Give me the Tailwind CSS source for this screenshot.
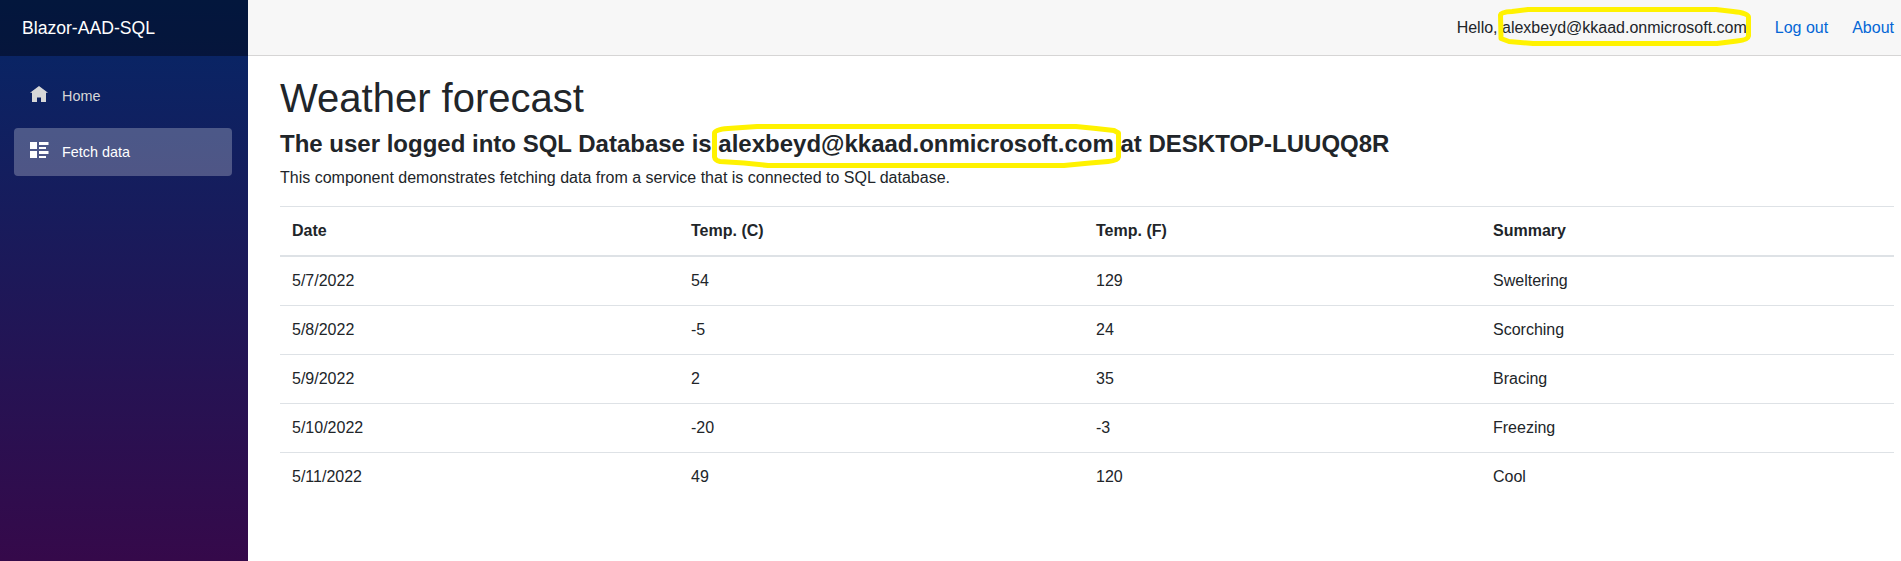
<!DOCTYPE html>
<html lang="en">
<head>
<meta charset="utf-8">
<title>Blazor-AAD-SQL</title>
<script src="https://cdn.jsdelivr.net/npm/@tailwindcss/browser@4"></script>
</head>
<body class="relative flex h-screen overflow-hidden bg-white font-['Liberation_Sans',Arial,sans-serif] text-base text-[#212529]">
<aside class="w-[248px] shrink-0 bg-[linear-gradient(180deg,#052767_0px,#3a0647_618px)]">
  <div class="flex h-14 items-center bg-black/40 pl-[22px] pb-px">
    <a class="text-[17.6px] leading-6 text-white">Blazor-AAD-SQL</a>
  </div>
  <nav class="flex flex-col gap-2 pt-4 pr-4 pl-[14px] text-[14.4px]">
    <a class="flex h-12 items-center rounded pl-4 text-[#d7d7d7]">
      <svg class="mb-1 h-4 w-[18px]" viewBox="0 0 18 16" fill="currentColor"><path d="M9 0L0 6.800H2V16H7V11.500H11V16H16V6.800H18Z"/></svg>
      <span class="pt-0.5 pl-[14px]">Home</span>
    </a>
    <a class="flex h-12 items-center rounded bg-white/25 pl-4 text-white">
      <svg class="mb-1 h-4 w-[19px]" viewBox="0 0 19 16" fill="currentColor"><path d="M0 0H7V7H0ZM9 0H18.500V3H9ZM9 5H16V7H9ZM0 9H7V16H0ZM9 9H18.500V12H9ZM9 14H16V16H9Z"/></svg>
      <span class="pt-0.5 pl-[13px]">Fetch data</span>
    </a>
  </nav>
</aside>
<main class="min-w-0 flex-1">
  <header class="flex h-14 items-center justify-end border-b border-[#d6d5d5] bg-[#f7f7f7] pr-[7px]">
    <span>Hello, alexbeyd@kkaad.onmicrosoft.com</span>
    <a class="ml-7 text-[#0366d6]">Log out</a>
    <a class="ml-6 text-[#0366d6]">About</a>
  </header>
  <section class="pt-[17.6px] pr-[7px] pl-8">
    <h1 class="mb-2 text-[40px] leading-[48px]">Weather forecast</h1>
    <h3 class="mb-2 text-2xl leading-[28.8px] font-bold">The user logged into SQL Database is alexbeyd@kkaad.onmicrosoft.com at DESKTOP-LUUQQ8R</h3>
    <p class="mb-[15.6px]">This component demonstrates fetching data from a service that is connected to SQL database.</p>
    <table class="w-full table-fixed border-separate border-spacing-0 text-left [&_td]:p-3 [&_th]:p-3 [&_th]:border-t [&_th]:border-b-2 [&_th]:border-[#dee2e6] [&_td]:border-[#dee2e6] [&_tr+tr_td]:border-t">
      <colgroup><col class="w-[399px]"><col class="w-[405px]"><col class="w-[397px]"><col></colgroup>
      <thead><tr><th>Date</th><th>Temp. (C)</th><th>Temp. (F)</th><th>Summary</th></tr></thead>
      <tbody>
        <tr><td>5/7/2022</td><td>54</td><td>129</td><td>Sweltering</td></tr>
        <tr><td>5/8/2022</td><td>-5</td><td>24</td><td>Scorching</td></tr>
        <tr><td>5/9/2022</td><td>2</td><td>35</td><td>Bracing</td></tr>
        <tr><td>5/10/2022</td><td>-20</td><td>-3</td><td>Freezing</td></tr>
        <tr><td>5/11/2022</td><td>49</td><td>120</td><td>Cool</td></tr>
      </tbody>
    </table>
  </section>
</main>
<!-- Hand-drawn highlighter rings over the user names -->
<svg class="pointer-events-none absolute top-0 left-0 h-[561px] w-[1901px]" viewBox="0 0 1901 561" fill="none" stroke="#fff200" stroke-width="5" stroke-linejoin="round">
  <path d="M1500.500 15Q1501 12 1512 11.500L1528 9.500H1716L1733 11.500Q1748 13 1748.500 17V36Q1748 40 1737 41L1717 43.500H1533L1509 41.500L1501 38.500Z"/>
  <path d="M714.500 133Q715 129.500 728 128.500L757 126.500H1076L1096 128.500L1114 130.500L1118.500 133V157Q1118 160.500 1108 161.500L1090 163L1064 165.500H768L744 163L720 161.500Q715 160.500 714.500 157Z"/>
</svg>
</body>
</html>
